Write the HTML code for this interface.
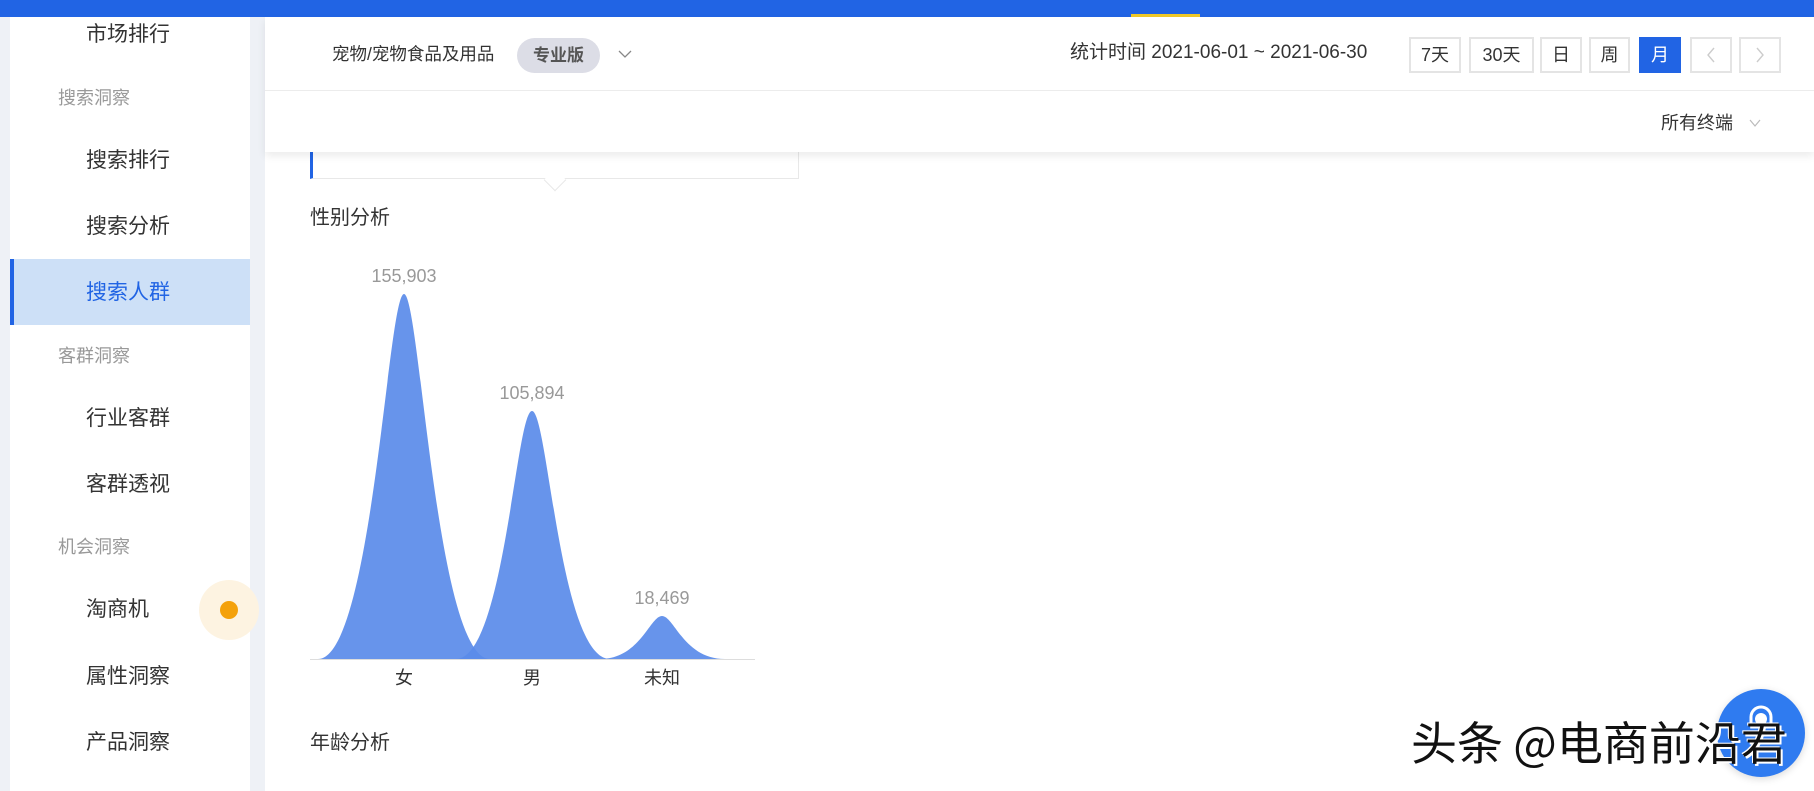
<!DOCTYPE html>
<html><head><meta charset="utf-8"><style>
*{margin:0;padding:0;box-sizing:border-box}
body{width:1814px;height:791px;overflow:hidden;background:#eef1f6;font-family:"Liberation Sans","Noto Sans CJK SC",sans-serif;position:relative;color:#333}
.abs{position:absolute;white-space:nowrap}
#top{left:0;top:0;width:1814px;height:17px;background:#2164e4}
#side{left:10px;top:17px;width:240px;height:774px;background:#fff}
.it{left:86px;font-size:21px;color:#333;line-height:24px}
.gp{left:58px;font-size:18px;color:#999;line-height:22px}
#main{left:265px;top:17px;width:1549px;height:774px;background:#fff}
#hdr{left:265px;top:17px;width:1549px;height:135px;background:#fff;box-shadow:0 4px 8px rgba(0,0,0,0.08)}
.btn{top:37px;height:36px;border:2px solid #e4e4e4;font-size:18px;line-height:32px;text-align:center;color:#333;background:#fff}
</style></head><body>
<div class="abs" id="top"></div>
<div class="abs" style="left:1131px;top:14px;width:69px;height:3px;background:#f1c927"></div>
<div class="abs" id="side"></div>
<div class="abs" style="left:10px;top:259px;width:240px;height:66px;background:#cde0f7;border-left:4px solid #2164e4"></div>
<div class="abs it" style="top:23px">市场排行</div>
<div class="abs gp" style="top:87px">搜索洞察</div>
<div class="abs it" style="top:149px">搜索排行</div>
<div class="abs it" style="top:215px">搜索分析</div>
<div class="abs it" style="top:281px;color:#2164e4">搜索人群</div>
<div class="abs gp" style="top:345px">客群洞察</div>
<div class="abs it" style="top:407px">行业客群</div>
<div class="abs it" style="top:473px">客群透视</div>
<div class="abs gp" style="top:536px">机会洞察</div>
<div class="abs it" style="top:598px">淘商机</div>
<div class="abs it" style="top:665px">属性洞察</div>
<div class="abs it" style="top:731px">产品洞察</div>
<div class="abs" style="left:199px;top:580px;width:60px;height:60px;border-radius:50%;background:#fdf3e1"></div>
<div class="abs" style="left:220px;top:601px;width:18px;height:18px;border-radius:50%;background:#f4a10b"></div>
<div class="abs" id="main"></div>
<div class="abs" style="left:310px;top:150px;width:489px;height:29px;border:1px solid #e8e8e8;border-left:3px solid #2164e4;border-top:none"></div>
<div class="abs" style="left:547px;top:172px;width:16px;height:16px;background:#fff;border-right:1px solid #e8e8e8;border-bottom:1px solid #e8e8e8;transform:rotate(45deg)"></div>
<div class="abs" id="hdr"></div>
<div class="abs" style="left:265px;top:90px;width:1549px;height:1px;background:#ececec"></div>
<div class="abs" style="left:332px;top:43px;font-size:17.5px;line-height:22px">宠物/宠物食品及用品</div>
<div class="abs" style="left:517px;top:38px;width:83px;height:35px;border-radius:18px;background:#dcdde6;font-size:17px;font-weight:bold;color:#555;text-align:center;line-height:35px">专业版</div>
<svg class="abs" style="left:617px;top:48px" width="16" height="12"><path d="M2 3 L8 9 L14 3" fill="none" stroke="#888" stroke-width="1.3"/></svg>
<div class="abs" style="left:1070px;top:42px;font-size:19px;line-height:22px">统计时间 2021-06-01 ~ 2021-06-30</div>
<div class="abs btn" style="left:1409px;width:52px">7天</div>
<div class="abs btn" style="left:1469px;width:65px">30天</div>
<div class="abs btn" style="left:1540px;width:42px">日</div>
<div class="abs btn" style="left:1589px;width:41px">周</div>
<div class="abs btn" style="left:1639px;width:42px;background:#2164e4;border-color:#2164e4;color:#fff">月</div>
<svg class="abs" style="left:1690px;top:37px" width="42" height="36"><rect x="1" y="1" width="40" height="34" fill="#fff" stroke="#e4e4e4" stroke-width="2"/><path d="M24 11 L18 18 L24 25" fill="none" stroke="#ccc" stroke-width="1.4"/></svg>
<svg class="abs" style="left:1739px;top:37px" width="42" height="36"><rect x="1" y="1" width="40" height="34" fill="#fff" stroke="#e4e4e4" stroke-width="2"/><path d="M18 11 L24 18 L18 25" fill="none" stroke="#ccc" stroke-width="1.4"/></svg>
<div class="abs" style="left:1661px;top:112px;font-size:18px;line-height:22px">所有终端</div>
<svg class="abs" style="left:1748px;top:118px" width="14" height="10"><path d="M2 2 L7 8 L12 2" fill="none" stroke="#bbb" stroke-width="1.2"/></svg>
<div class="abs" style="left:310px;top:206px;font-size:20px;line-height:24px">性别分析</div>
<svg class="abs" style="left:0;top:0" width="1814" height="791">
<g fill="#5a8be9" fill-opacity="0.92">
<path d="M318 659 C372 659 388 294 404 294 C420 294 436 659 490 659 Z"/>
<path d="M456 659 C504 659 516 411 532 411 C548 411 560 659 610 659 Z"/>
<path d="M600 659 C640 659 650 616 662 616 C674 616 684 659 725 659 Z"/>
</g>
<line x1="310" y1="659.5" x2="755" y2="659.5" stroke="#ddd"/>
<g font-family="Liberation Sans,sans-serif" font-size="18" fill="#999" text-anchor="middle">
<text x="404" y="282">155,903</text><text x="532" y="399">105,894</text><text x="662" y="604">18,469</text>
</g>
<g font-family="Liberation Sans,Noto Sans CJK SC,sans-serif" font-size="18" fill="#333" text-anchor="middle">
<text x="404" y="684">女</text><text x="532" y="684">男</text><text x="662" y="684">未知</text>
</g>
</svg>
<div class="abs" style="left:310px;top:731px;font-size:20px;line-height:24px">年龄分析</div>
<div class="abs" style="left:1717px;top:689px;width:88px;height:88px;border-radius:50%;background:#2f7bf0;box-shadow:0 2px 8px rgba(0,0,0,0.15)"></div>
<svg class="abs" style="left:1745px;top:705px" width="32" height="30"><path d="M6 18 V12 A10 10 0 0 1 26 12 V18" fill="none" stroke="#fff" stroke-width="3"/><circle cx="16" cy="14" r="6" fill="#fff"/></svg>
<div class="abs" style="left:1411px;top:715px;font-size:46px;line-height:52px;color:#111;font-family:'Noto Sans CJK SC',sans-serif;text-shadow:2px 2px 0 #fff,-1px -1px 0 #fff">头条 @电商前沿君</div>
</body></html>
